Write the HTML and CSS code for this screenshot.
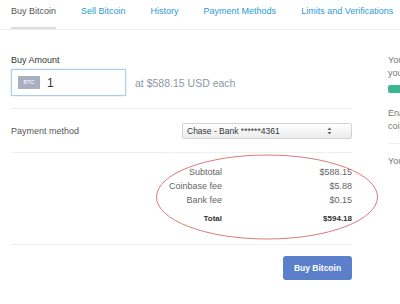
FILE: index.html
```html
<!DOCTYPE html>
<html>
<head>
	<meta charset="utf-8">
	<title>Buy Bitcoin</title>
	<link rel="stylesheet" href="styles.css">
</head>
<body>
	<div class="tabs">
		<a class="tab tab--active">Buy Bitcoin</a>
		<a class="tab">Sell Bitcoin</a>
		<a class="tab">History</a>
		<a class="tab">Payment Methods</a>
		<a class="tab">Limits and Verifications</a>
	</div>

	<div class="page">
		<div class="main">
			<div class="section amount">
				<div class="amount__label">Buy Amount</div>
				<div class="amount__row">
					<div class="amount__input">
						<span class="badge">BTC</span>
						<span class="amount__value">1</span>
					</div>
					<span class="amount__price">at $588.15 USD each</span>
				</div>
			</div>

			<div class="section method">
				<span class="method__label">Payment method</span>
				<div class="select">
					<span>Chase - Bank ******4361</span>
					<svg class="select__arrows" width="5" height="8" viewBox="0 0 5 8">
						<path d="M2.5 0.5 L4.5 3 L0.5 3 Z M2.5 7.5 L4.5 5 L0.5 5 Z" fill="#666"/>
					</svg>
				</div>
			</div>

			<div class="section summary">
				<div class="summary__grid">
					<span class="summary__key">Subtotal</span>
					<span class="summary__val">$588.15</span>
					<span class="summary__key">Coinbase fee</span>
					<span class="summary__val">$5.88</span>
					<span class="summary__key">Bank fee</span>
					<span class="summary__val">$0.15</span>
					<span class="summary__key summary__total">Total</span>
					<span class="summary__val summary__total">$594.18</span>
				</div>
				<svg class="circle" width="226" height="90" viewBox="0 0 226 90">
					<ellipse cx="113" cy="45" rx="110.5" ry="42" fill="none" stroke="#d66c6c" stroke-width="0.9"/>
				</svg>
			</div>

			<div class="actions">
				<button class="buy">Buy Bitcoin</button>
			</div>
		</div>

		<div class="side">
			<div class="side__block">
				<div class="side__line">Your purchase limit is $3,000 per day</div>
				<div class="side__line">you have used $594.18 of it today</div>
				<div class="side__bar"></div>
				<div class="side__line side__line--gap">Enable two-factor authentication</div>
				<div class="side__line">coins are kept safe with Coinbase</div>
			</div>
			<div class="side__line side__line--last">Your coins will arrive in 4 days</div>
		</div>
	</div>
</body>
</html>
```

FILE: styles.css
```css
body {
	font-family: "Liberation Sans", Helvetica, Arial, sans-serif;
	color: #555;
	background-color: #fff;
	margin: 0;
	overflow: hidden;
}

.tabs {
	display: flex;
	padding-left: 11px;
	border-bottom: 1px solid #ececec;
}

.tab {
	font-size: 9px;
	line-height: 11px;
	padding: 6px 0 10px;
	margin-right: 25px;
	color: #2b9bd5;
	white-space: nowrap;
	border-bottom: 2px solid transparent;
}

.tab--active {
	color: #555;
	border-bottom-color: #ddd;
}

.page {
	display: flex;
	padding-left: 11px;
}

.main {
	flex: 0 0 341px;
}

.section {
	border-bottom: 1px solid #f0f0f0;
}

.amount {
	padding: 25px 0 12px;
}

.amount__label {
	font-size: 9px;
	line-height: 11px;
	color: #333;
	margin-bottom: 3px;
}

.amount__row {
	display: flex;
	align-items: center;
}

.amount__input {
	box-sizing: border-box;
	display: flex;
	align-items: center;
	width: 115px;
	height: 27px;
	padding-left: 6px;
	border: 1px solid #a9cdee;
	box-shadow: 0 0 2px rgba(120, 170, 230, .35);
}

.badge {
	width: 22px;
	height: 13px;
	line-height: 13px;
	text-align: center;
	font-size: 5.5px;
	color: #fff;
	background-color: #a8afc1;
}

.amount__value {
	margin-left: 7px;
	font-size: 12px;
	color: #333;
}

.amount__price {
	margin-left: 9px;
	font-size: 10.5px;
	color: #8f95a7;
}

.method {
	display: flex;
	align-items: center;
	justify-content: space-between;
	padding: 14px 0 13px;
}

.method__label {
	font-size: 9px;
	color: #555;
}

.select {
	box-sizing: border-box;
	display: flex;
	align-items: center;
	justify-content: space-between;
	width: 170px;
	height: 16px;
	padding: 0 19px 0 4px;
	font-size: 8.5px;
	color: #333;
	border: 1px solid #d3d3d3;
	border-radius: 2px;
	background: linear-gradient(#fff, #ececec);
}

.summary {
	position: relative;
	padding: 12px 0 18px;
}

.summary__grid {
	display: grid;
	grid-template-columns: 211px 130px;
	font-size: 9px;
	line-height: 14px;
	color: #666;
}

.summary__key,
.summary__val {
	text-align: right;
}

.summary__total {
	margin-top: 5px;
	font-size: 8px;
	font-weight: bold;
	color: #333;
}

.circle {
	position: absolute;
	left: 143px;
	top: -1px;
}

.actions {
	display: flex;
	justify-content: flex-end;
	padding-top: 11px;
}

.buy {
	width: 69px;
	height: 24px;
	border: none;
	border-radius: 3px;
	background-color: #5c7fcb;
	color: #fff;
	font-family: inherit;
	font-size: 8.5px;
	font-weight: bold;
	padding: 0;
}

.side {
	margin-left: 36px;
	padding-top: 24px;
	font-size: 9px;
	line-height: 13px;
	color: #777;
	white-space: nowrap;
}

.side__block {
	padding-bottom: 10px;
	border-bottom: 1px solid #eee;
}

.side__bar {
	width: 120px;
	height: 8px;
	margin-top: 5px;
	border-radius: 2px;
	background-color: #3db88e;
}

.side__line--gap {
	margin-top: 14px;
}

.side__line--last {
	margin-top: 11px;
}
```
